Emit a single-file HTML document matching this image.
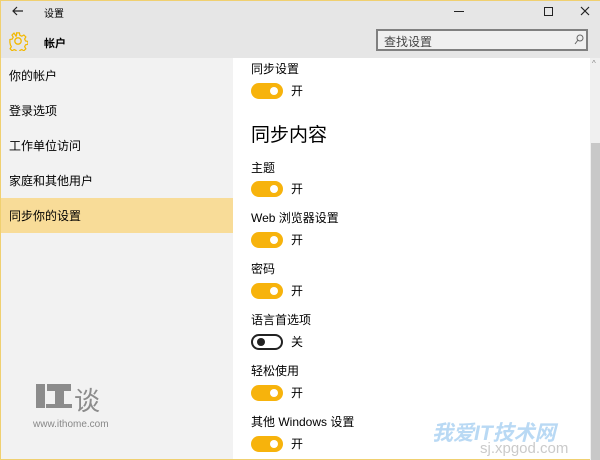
<!DOCTYPE html><html><head><meta charset="utf-8"><style>
body{margin:0;width:600px;height:460px;overflow:hidden;position:relative;background:#fff;font-family:"Liberation Sans","Noto Sans CJK SC",sans-serif;color:#000}
.a{position:absolute}
.lbl{position:absolute;left:251px;font-size:12px;line-height:14px}
.tg{position:absolute;left:251px;width:32px;height:16px;border-radius:8px;background:#f7b30c}
.tg::after{content:"";position:absolute;right:5px;top:4px;width:8px;height:8px;border-radius:50%;background:#fff}
.off{background:#fff;border:2px solid #222;width:28px;height:12px}
.off::after{left:4px;right:auto;top:2px;background:#222}
.st{position:absolute;left:291px;font-size:12px;line-height:14px}
.nav{position:absolute;left:9px;font-size:12px;line-height:14px}
</style></head><body>
<div class="a" style="left:0;top:0;width:600px;height:58px;background:#e6e6e6"></div>
<div class="a" style="left:0;top:58px;width:233px;height:402px;background:#f2f2f2"></div>
<div class="a" style="left:0;top:0;width:1px;height:460px;background:#f0d070"></div>
<div class="a" style="left:0;top:0;width:600px;height:1px;background:#f0d070"></div>
<div class="a" style="left:0;top:459px;width:600px;height:1px;background:#f0d070"></div>
<svg class="a" style="left:12px;top:6px" width="12" height="10" viewBox="0 0 12 10"><path d="M11 5H1M5 1L1 5L5 9" fill="none" stroke="#222" stroke-width="1.2"/></svg>
<div class="a" style="left:44px;top:5px;font-size:10px">设置</div>
<div class="a" style="left:454px;top:11px;width:10px;height:1px;background:#222"></div>
<div class="a" style="left:544px;top:7px;width:7px;height:7px;border:1px solid #222"></div>
<svg class="a" style="left:580px;top:6px" width="10" height="10"><path d="M1 1L9 9M9 1L1 9" stroke="#222" stroke-width="1.2"/></svg>
<svg class="a" style="left:8px;top:31px" width="20" height="20" viewBox="0 0 20 20"><g fill="none" stroke="#f2b800" stroke-width="1.3"><path d="M8.5 1.5h3l.5 2.5 2 1 2.2-1.3 2.1 2.1-1.3 2.2 1 2 2.5.5v3l-2.5.5-1 2 1.3 2.2-2.1 2.1-2.2-1.3-2 1-.5 2.5h-3l-.5-2.5-2-1-2.2 1.3-2.1-2.1 1.3-2.2-1-2L1.5 11.5v-3l2.5-.5 1-2-1.3-2.2 2.1-2.1L8 5l.5-1z" transform="scale(0.95) translate(0.5 0.5)"/><circle cx="10" cy="10" r="3.2"/></g></svg>
<div class="a" style="left:44px;top:35px;font-size:11px;font-weight:bold">帐户</div>
<div class="a" style="left:376px;top:29px;width:212px;height:22px;border:2px solid #808080;background:#f0f0f0;box-sizing:border-box"></div>
<div class="a" style="left:384px;top:33px;font-size:12px;color:#444">查找设置</div>
<svg class="a" style="left:574px;top:34px" width="10" height="11"><circle cx="6" cy="4" r="3" fill="none" stroke="#666"/><path d="M4 6L1 10" stroke="#666"/></svg>
<div class="nav" style="top:69px">你的帐户</div>
<div class="nav" style="top:104px">登录选项</div>
<div class="nav" style="top:139px">工作单位访问</div>
<div class="nav" style="top:174px">家庭和其他用户</div>
<div class="a" style="left:1px;top:198px;width:232px;height:35px;background:#f8dc98"></div>
<div class="nav" style="top:209px">同步你的设置</div>
<div class="a" style="left:36px;top:384px;width:9px;height:24px;background:#8c8c8c"></div>
<div class="a" style="left:47px;top:384px;width:24px;height:7px;background:#8c8c8c"></div>
<div class="a" style="left:55px;top:391px;width:9px;height:17px;background:#8c8c8c"></div>
<div class="a" style="left:46px;top:404px;width:26px;height:4px;background:#8c8c8c"></div>
<div class="a" style="left:74px;top:381px;font-size:26px;color:#8c8c8c">谈</div>
<div class="a" style="left:33px;top:419px;font-size:10px;color:#888">www.ithome.com</div>
<div class="a" style="left:590px;top:58px;width:10px;height:402px;background:#f0f0f0"></div>
<div class="a" style="left:591px;top:143px;width:9px;height:317px;background:#c8c8c8"></div>
<div class="a" style="left:592px;top:59px;font-size:8px;color:#888">^</div>
<div class="lbl" style="top:62px">同步设置</div><div class="tg" style="top:83px"></div><div class="st" style="top:84px">开</div>
<div class="a" style="left:251px;top:125px;font-size:19px;line-height:22px">同步内容</div>
<div class="lbl" style="top:161px">主题</div><div class="tg" style="top:181px"></div><div class="st" style="top:182px">开</div>
<div class="lbl" style="top:211px">Web 浏览器设置</div><div class="tg" style="top:232px"></div><div class="st" style="top:233px">开</div>
<div class="lbl" style="top:262px">密码</div><div class="tg" style="top:283px"></div><div class="st" style="top:284px">开</div>
<div class="lbl" style="top:313px">语言首选项</div><div class="tg off" style="top:334px"></div><div class="st" style="top:335px">关</div>
<div class="lbl" style="top:364px">轻松使用</div><div class="tg" style="top:385px"></div><div class="st" style="top:386px">开</div>
<div class="lbl" style="top:415px">其他 Windows 设置</div><div class="tg" style="top:436px"></div><div class="st" style="top:437px">开</div>
<div class="a" style="left:432px;top:417px;font-size:21px;font-weight:bold;color:rgba(100,170,230,.45);font-style:italic">我爱IT技术网</div>
<div class="a" style="left:480px;top:440px;font-size:15px;color:rgba(150,150,150,.5)">sj.xpgod.com</div>
</body></html>
